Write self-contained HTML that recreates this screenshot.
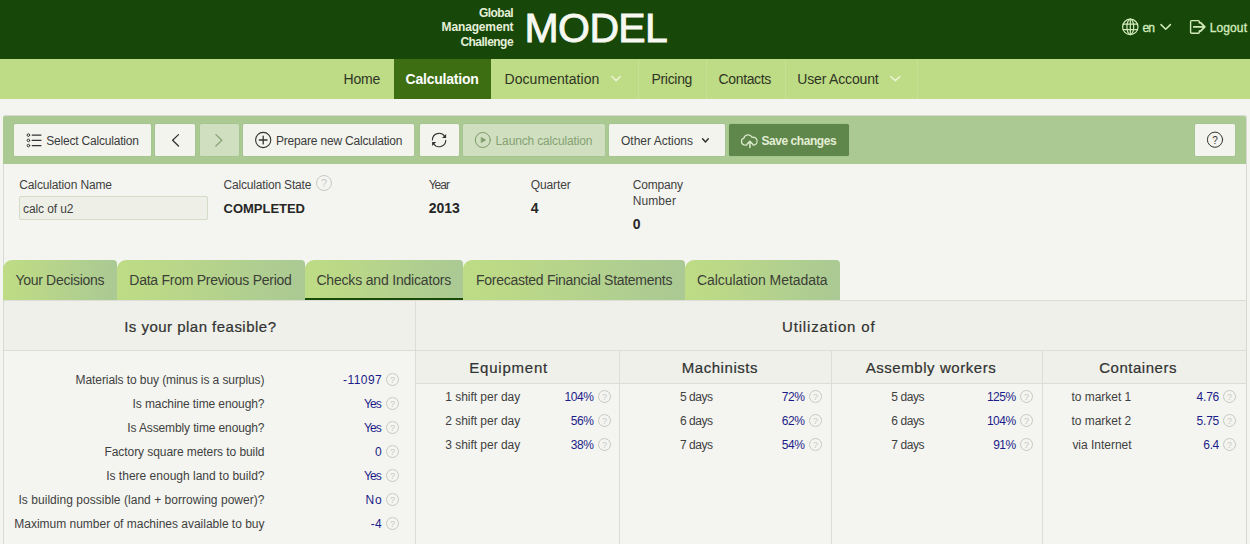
<!DOCTYPE html>
<html lang="en"><head><meta charset="utf-8"><title>MODEL - Calculation</title>
<style>
html,body{margin:0;padding:0}
body{width:1250px;height:544px;overflow:hidden;position:relative;background:#f4f5f0;font-family:"Liberation Sans","DejaVu Sans",sans-serif}
.a{position:absolute;display:block}
.t,.t2{position:absolute;white-space:nowrap;line-height:1;display:block}
.btn{position:absolute;top:124.3px;height:31.3px;background:#f3f4ee;border-radius:1.5px;box-shadow:0 0 0 .5px rgba(0,0,0,.04)}
.btn.dis{background:#cfdfc0}
.tab{position:absolute;top:260px;height:39.5px;border-radius:9px 4px 0 0;background:linear-gradient(90deg,#bedb85 0%,#bbd888 25%,#aac994 100%)}
.vl{position:absolute;width:1px;background:#dcddd7}
.hl{position:absolute;height:1px;background:#dcddd7}

</style></head>
<body>
<div class="a" style="left:0;top:0;width:1250px;height:59px;background:#174809"></div>
<div class="a" style="left:0;top:59px;width:1250px;height:40px;background:#bedb85"></div>
<div class="a" style="left:394px;top:59px;width:96.7px;height:40px;background:#3d6e12"></div>
<div class="a" style="left:638px;top:59px;width:1px;height:40px;background:rgba(255,255,255,.14)"></div>
<div class="a" style="left:705.5px;top:59px;width:1px;height:40px;background:rgba(255,255,255,.14)"></div>
<div class="a" style="left:784.5px;top:59px;width:1px;height:40px;background:rgba(255,255,255,.14)"></div>
<div class="a" style="left:917px;top:59px;width:1px;height:40px;background:rgba(255,255,255,.14)"></div>

<!-- region container -->
<div class="a" style="left:3px;top:115px;width:1241.6px;height:460px;border:1px solid #d8d9d3;border-radius:2px"></div>
<div class="a" style="left:3.2px;top:115.5px;width:1243.2px;height:48.2px;background:#abc993;border-radius:2px 2px 0 0"></div>

<!-- toolbar buttons -->
<div class="btn" style="left:14.2px;width:136.4px"></div>
<div class="btn" style="left:155.2px;width:39.4px"></div>
<div class="btn dis" style="left:199.5px;width:39.1px"></div>
<div class="btn" style="left:243.4px;width:171px"></div>
<div class="btn" style="left:419.6px;width:39px"></div>
<div class="btn dis" style="left:463.4px;width:141.2px"></div>
<div class="btn" style="left:609.4px;width:115.2px"></div>
<div class="btn" style="left:729.2px;width:119.8px;background:#5f874b"></div>
<div class="btn" style="left:1195.3px;width:39.6px"></div>

<!-- input -->
<div class="a" style="left:19.3px;top:196.3px;width:186.4px;height:21.4px;background:#eef0e8;border:1px solid #d3dcc4;border-radius:2px"></div>

<!-- tabs -->
<div class="tab" style="left:3px;width:114.3px"></div>
<div class="tab" style="left:117.3px;width:188px"></div>
<div class="tab" style="left:305.3px;width:157.7px"></div>
<div class="a" style="left:305.3px;top:297.6px;width:157.7px;height:2.1px;background:#1a4a08"></div>
<div class="tab" style="left:463px;width:222.2px"></div>
<div class="tab" style="left:685.2px;width:154.9px"></div>

<!-- panel -->
<div class="a" style="left:4px;top:300.5px;width:1241.5px;height:50px;background:#eef0e9"></div>
<div class="a" style="left:416px;top:350.5px;width:829.5px;height:33px;background:#eef0e9"></div>
<div class="hl" style="left:4px;top:300px;width:1242px"></div>
<div class="hl" style="left:4px;top:350px;width:1242px"></div>
<div class="hl" style="left:416px;top:383px;width:830px"></div>
<div class="vl" style="left:415px;top:300.5px;height:260px"></div>
<div class="vl" style="left:619px;top:351px;height:200px"></div>
<div class="vl" style="left:831px;top:351px;height:200px"></div>
<div class="vl" style="left:1042px;top:351px;height:200px"></div>

<!-- ICONS -->
<svg class="a" style="left:0;top:0" width="1250" height="170" viewBox="0 0 1250 170" fill="none" stroke-linecap="round" stroke-linejoin="round">
  <!-- globe -->
  <g stroke="#d3eabc" stroke-width="1.2">
    <circle cx="1130.3" cy="26.9" r="7.7"/>
    <ellipse cx="1130.3" cy="26.9" rx="3.4" ry="7.7"/>
    <path d="M1130.3 19.2V34.6M1123.2 24.2H1137.4M1123.2 29.6H1137.4"/>
  </g>
  <!-- en chevron -->
  <path d="M1161 24.6L1165.7 29.2L1170.4 24.6" stroke="#d3eabc" stroke-width="1.5"/>
  <!-- logout -->
  <g stroke="#d3eabc" stroke-width="1.4">
    <path d="M1199.3 23V21.6Q1199.3 20.6 1198.3 20.6H1191.6Q1190.6 20.6 1190.6 21.6V32.2Q1190.6 33.2 1191.6 33.2H1198.3Q1199.3 33.2 1199.3 32.2V30.8"/>
    <path d="M1193.8 26.9H1204M1200.6 22.6L1204.8 26.9L1200.6 31.2" stroke-width="1.8"/>
  </g>
  <!-- nav chevrons -->
  <path d="M611.9 76.5L616.1 80.6L620.3 76.5" stroke="#eaf4d6" stroke-width="1.5"/>
  <path d="M890.7 76.5L895.3 80.6L899.9 76.5" stroke="#eaf4d6" stroke-width="1.5"/>
  <!-- list icon -->
  <g stroke="#333" stroke-width="1">
    <circle cx="28.4" cy="135.1" r="1.3"/><circle cx="28.4" cy="140.4" r="1.3"/><circle cx="28.4" cy="145.6" r="1.3"/>
    <path d="M32.2 135.1H41M32.2 140.4H41M32.2 145.6H41" stroke-width="1.1"/>
  </g>
  <!-- prev / next -->
  <path d="M178.5 134.6L172.6 140.3L178.5 146" stroke="#333" stroke-width="1.3"/>
  <path d="M215.9 134.6L221.8 140.3L215.9 146" stroke="#8aa476" stroke-width="1.3"/>
  <!-- plus circle -->
  <g stroke="#333" stroke-width="1.1">
    <circle cx="263.2" cy="140" r="7.6"/>
    <path d="M259.3 140H267.1M263.2 136.1V143.9" stroke-width="1.3"/>
  </g>
  <!-- refresh -->
  <g stroke="#333" stroke-width="1.1">
    <path d="M432.4 140A6.7 6.7 0 0 1 444.6 136.2"/>
    <path d="M445.8 140.2A6.7 6.7 0 0 1 433.6 143.8"/>
    <path d="M446.1 134V138.1H442Z" fill="#333" stroke="none"/>
    <path d="M432.1 146V141.9H436.2Z" fill="#333" stroke="none"/>
  </g>
  <!-- play circle (disabled) -->
  <g stroke="#7d9a68" stroke-width="1">
    <circle cx="482.8" cy="140" r="7.5"/>
    <path d="M481.3 137.3L485.8 140L481.3 142.7Z" fill="#7d9a68" stroke-width=".4"/>
  </g>
  <!-- other actions chevron -->
  <path d="M702.6 138.8L705.45 141.9L708.3 138.8" stroke="#333" stroke-width="1.5"/>
  <!-- cloud upload -->
  <g stroke="#dcebcd" stroke-width="1.25">
    <path d="M746.6 145H744.6A3.5 3.5 0 0 1 743.9 138.2A4.3 4.3 0 0 1 752 137.3A3.95 3.95 0 0 1 754.2 145H753"/>
    <path d="M749.9 147.6V141.6M747 144.3L749.9 141.4L752.8 144.3" stroke-width="1.5"/>
  </g>
  <!-- help -->
  <circle cx="1215" cy="139.7" r="7.6" stroke="#333" stroke-width="1"/>
</svg>
<span class="t2" style="left:1212.3px;top:135.8px;font-size:10px;color:#333">?</span>

<svg class="a" style="left:315.2px;top:174.0px" width="18" height="18" viewBox="0 0 18 18"><circle cx="9.0" cy="9.0" r="7.5" fill="none" stroke="#c9c9c4" stroke-width="1"/><text x="9.0" y="12.9" font-size="11" text-anchor="middle" fill="#c9c9c4" font-family='"Liberation Sans",sans-serif'>?</text></svg>
<svg class="a" style="left:384.8px;top:371.9px" width="15" height="15" viewBox="0 0 15 15"><circle cx="7.5" cy="7.5" r="6.0" fill="none" stroke="#c9c9c4" stroke-width="1"/><text x="7.5" y="10.7" font-size="9" text-anchor="middle" fill="#c9c9c4" font-family='"Liberation Sans",sans-serif'>?</text></svg>
<svg class="a" style="left:384.8px;top:395.9px" width="15" height="15" viewBox="0 0 15 15"><circle cx="7.5" cy="7.5" r="6.0" fill="none" stroke="#c9c9c4" stroke-width="1"/><text x="7.5" y="10.7" font-size="9" text-anchor="middle" fill="#c9c9c4" font-family='"Liberation Sans",sans-serif'>?</text></svg>
<svg class="a" style="left:384.8px;top:419.9px" width="15" height="15" viewBox="0 0 15 15"><circle cx="7.5" cy="7.5" r="6.0" fill="none" stroke="#c9c9c4" stroke-width="1"/><text x="7.5" y="10.7" font-size="9" text-anchor="middle" fill="#c9c9c4" font-family='"Liberation Sans",sans-serif'>?</text></svg>
<svg class="a" style="left:384.8px;top:443.9px" width="15" height="15" viewBox="0 0 15 15"><circle cx="7.5" cy="7.5" r="6.0" fill="none" stroke="#c9c9c4" stroke-width="1"/><text x="7.5" y="10.7" font-size="9" text-anchor="middle" fill="#c9c9c4" font-family='"Liberation Sans",sans-serif'>?</text></svg>
<svg class="a" style="left:384.8px;top:467.9px" width="15" height="15" viewBox="0 0 15 15"><circle cx="7.5" cy="7.5" r="6.0" fill="none" stroke="#c9c9c4" stroke-width="1"/><text x="7.5" y="10.7" font-size="9" text-anchor="middle" fill="#c9c9c4" font-family='"Liberation Sans",sans-serif'>?</text></svg>
<svg class="a" style="left:384.8px;top:491.9px" width="15" height="15" viewBox="0 0 15 15"><circle cx="7.5" cy="7.5" r="6.0" fill="none" stroke="#c9c9c4" stroke-width="1"/><text x="7.5" y="10.7" font-size="9" text-anchor="middle" fill="#c9c9c4" font-family='"Liberation Sans",sans-serif'>?</text></svg>
<svg class="a" style="left:384.8px;top:515.9px" width="15" height="15" viewBox="0 0 15 15"><circle cx="7.5" cy="7.5" r="6.0" fill="none" stroke="#c9c9c4" stroke-width="1"/><text x="7.5" y="10.7" font-size="9" text-anchor="middle" fill="#c9c9c4" font-family='"Liberation Sans",sans-serif'>?</text></svg>
<svg class="a" style="left:596.8px;top:388.8px" width="15" height="15" viewBox="0 0 15 15"><circle cx="7.5" cy="7.5" r="6.0" fill="none" stroke="#c9c9c4" stroke-width="1"/><text x="7.5" y="10.7" font-size="9" text-anchor="middle" fill="#c9c9c4" font-family='"Liberation Sans",sans-serif'>?</text></svg>
<svg class="a" style="left:596.8px;top:412.8px" width="15" height="15" viewBox="0 0 15 15"><circle cx="7.5" cy="7.5" r="6.0" fill="none" stroke="#c9c9c4" stroke-width="1"/><text x="7.5" y="10.7" font-size="9" text-anchor="middle" fill="#c9c9c4" font-family='"Liberation Sans",sans-serif'>?</text></svg>
<svg class="a" style="left:596.8px;top:436.8px" width="15" height="15" viewBox="0 0 15 15"><circle cx="7.5" cy="7.5" r="6.0" fill="none" stroke="#c9c9c4" stroke-width="1"/><text x="7.5" y="10.7" font-size="9" text-anchor="middle" fill="#c9c9c4" font-family='"Liberation Sans",sans-serif'>?</text></svg>
<svg class="a" style="left:808.2px;top:388.8px" width="15" height="15" viewBox="0 0 15 15"><circle cx="7.5" cy="7.5" r="6.0" fill="none" stroke="#c9c9c4" stroke-width="1"/><text x="7.5" y="10.7" font-size="9" text-anchor="middle" fill="#c9c9c4" font-family='"Liberation Sans",sans-serif'>?</text></svg>
<svg class="a" style="left:808.2px;top:412.8px" width="15" height="15" viewBox="0 0 15 15"><circle cx="7.5" cy="7.5" r="6.0" fill="none" stroke="#c9c9c4" stroke-width="1"/><text x="7.5" y="10.7" font-size="9" text-anchor="middle" fill="#c9c9c4" font-family='"Liberation Sans",sans-serif'>?</text></svg>
<svg class="a" style="left:808.2px;top:436.8px" width="15" height="15" viewBox="0 0 15 15"><circle cx="7.5" cy="7.5" r="6.0" fill="none" stroke="#c9c9c4" stroke-width="1"/><text x="7.5" y="10.7" font-size="9" text-anchor="middle" fill="#c9c9c4" font-family='"Liberation Sans",sans-serif'>?</text></svg>
<svg class="a" style="left:1019.3px;top:388.8px" width="15" height="15" viewBox="0 0 15 15"><circle cx="7.5" cy="7.5" r="6.0" fill="none" stroke="#c9c9c4" stroke-width="1"/><text x="7.5" y="10.7" font-size="9" text-anchor="middle" fill="#c9c9c4" font-family='"Liberation Sans",sans-serif'>?</text></svg>
<svg class="a" style="left:1019.3px;top:412.8px" width="15" height="15" viewBox="0 0 15 15"><circle cx="7.5" cy="7.5" r="6.0" fill="none" stroke="#c9c9c4" stroke-width="1"/><text x="7.5" y="10.7" font-size="9" text-anchor="middle" fill="#c9c9c4" font-family='"Liberation Sans",sans-serif'>?</text></svg>
<svg class="a" style="left:1019.3px;top:436.8px" width="15" height="15" viewBox="0 0 15 15"><circle cx="7.5" cy="7.5" r="6.0" fill="none" stroke="#c9c9c4" stroke-width="1"/><text x="7.5" y="10.7" font-size="9" text-anchor="middle" fill="#c9c9c4" font-family='"Liberation Sans",sans-serif'>?</text></svg>
<svg class="a" style="left:1222.3px;top:388.8px" width="15" height="15" viewBox="0 0 15 15"><circle cx="7.5" cy="7.5" r="6.0" fill="none" stroke="#c9c9c4" stroke-width="1"/><text x="7.5" y="10.7" font-size="9" text-anchor="middle" fill="#c9c9c4" font-family='"Liberation Sans",sans-serif'>?</text></svg>
<svg class="a" style="left:1222.3px;top:412.8px" width="15" height="15" viewBox="0 0 15 15"><circle cx="7.5" cy="7.5" r="6.0" fill="none" stroke="#c9c9c4" stroke-width="1"/><text x="7.5" y="10.7" font-size="9" text-anchor="middle" fill="#c9c9c4" font-family='"Liberation Sans",sans-serif'>?</text></svg>
<svg class="a" style="left:1222.3px;top:436.8px" width="15" height="15" viewBox="0 0 15 15"><circle cx="7.5" cy="7.5" r="6.0" fill="none" stroke="#c9c9c4" stroke-width="1"/><text x="7.5" y="10.7" font-size="9" text-anchor="middle" fill="#c9c9c4" font-family='"Liberation Sans",sans-serif'>?</text></svg>
<span class="t" id="t0" style="left:479.0px;top:7.0px;font-size:12px;font-weight:700;color:#e6efd9;letter-spacing:-0.549px;">Global</span>
<span class="t" id="t1" style="left:441.6px;top:21.4px;font-size:12px;font-weight:700;color:#e6efd9;letter-spacing:-0.151px;">Management</span>
<span class="t" id="t2" style="left:460.4px;top:35.8px;font-size:12px;font-weight:700;color:#e6efd9;letter-spacing:-0.520px;">Challenge</span>
<span class="t" id="t3" style="left:524.6px;top:8.4px;font-size:41px;font-weight:400;color:#f6f8f1;letter-spacing:-0.628px;-webkit-text-stroke:0.9px #f6f8f1;">MODEL</span>
<span class="t" id="t4" style="left:1142.5px;top:21.5px;font-size:12px;font-weight:400;color:#d3eabc;letter-spacing:-0.859px;-webkit-text-stroke:0.35px #d3eabc;">en</span>
<span class="t" id="t5" style="left:1209.7px;top:21.5px;font-size:12px;font-weight:400;color:#d3eabc;letter-spacing:0.119px;-webkit-text-stroke:0.35px #d3eabc;">Logout</span>
<span class="t" id="t6" style="left:343.6px;top:72.3px;font-size:14px;font-weight:400;color:#2f3524;letter-spacing:-0.220px;">Home</span>
<span class="t" id="t7" style="left:405.6px;top:72.3px;font-size:14px;font-weight:700;color:#ffffff;letter-spacing:-0.227px;">Calculation</span>
<span class="t" id="t8" style="left:504.6px;top:72.3px;font-size:14px;font-weight:400;color:#2f3524;letter-spacing:0.044px;">Documentation</span>
<span class="t" id="t9" style="left:651.5px;top:72.3px;font-size:14px;font-weight:400;color:#2f3524;letter-spacing:-0.316px;">Pricing</span>
<span class="t" id="t10" style="left:718.5px;top:72.3px;font-size:14px;font-weight:400;color:#2f3524;letter-spacing:-0.350px;">Contacts</span>
<span class="t" id="t11" style="left:797.3px;top:72.3px;font-size:14px;font-weight:400;color:#2f3524;letter-spacing:-0.170px;">User Account</span>
<span class="t" id="t12" style="left:46.3px;top:135.0px;font-size:12px;font-weight:400;color:#3b3b3b;letter-spacing:-0.198px;">Select Calculation</span>
<span class="t" id="t13" style="left:276.0px;top:135.0px;font-size:12px;font-weight:400;color:#3b3b3b;letter-spacing:-0.198px;">Prepare new Calculation</span>
<span class="t" id="t14" style="left:495.6px;top:135.0px;font-size:12px;font-weight:400;color:#86a272;letter-spacing:-0.153px;">Launch calculation</span>
<span class="t" id="t15" style="left:621.0px;top:135.0px;font-size:12px;font-weight:400;color:#3b3b3b;letter-spacing:-0.004px;">Other Actions</span>
<span class="t" id="t16" style="left:761.4px;top:135.0px;font-size:12px;font-weight:700;color:#e3eed5;letter-spacing:-0.441px;">Save changes</span>
<span class="t" id="t17" style="left:19.3px;top:179.0px;font-size:12px;font-weight:400;color:#3f3f3f;letter-spacing:-0.135px;">Calculation Name</span>
<span class="t" id="t18" style="left:23.1px;top:202.8px;font-size:12px;font-weight:400;color:#3f3f3f;letter-spacing:-0.108px;">calc of u2</span>
<span class="t" id="t19" style="left:223.6px;top:179.0px;font-size:12px;font-weight:400;color:#3f3f3f;letter-spacing:-0.183px;">Calculation State</span>
<span class="t" id="t20" style="left:223.6px;top:201.8px;font-size:13px;font-weight:700;color:#262626;letter-spacing:-0.028px;">COMPLETED</span>
<span class="t" id="t21" style="left:428.7px;top:179.0px;font-size:12px;font-weight:400;color:#3f3f3f;letter-spacing:-0.983px;">Year</span>
<span class="t" id="t22" style="left:428.7px;top:201.0px;font-size:14px;font-weight:700;color:#262626;letter-spacing:-0.052px;">2013</span>
<span class="t" id="t23" style="left:530.7px;top:179.0px;font-size:12px;font-weight:400;color:#3f3f3f;letter-spacing:-0.098px;">Quarter</span>
<span class="t" id="t24" style="left:530.7px;top:201.0px;font-size:14px;font-weight:700;color:#262626;letter-spacing:0.000px;">4</span>
<span class="t" id="t25" style="left:632.7px;top:179.0px;font-size:12px;font-weight:400;color:#3f3f3f;letter-spacing:-0.193px;">Company</span>
<span class="t" id="t26" style="left:632.7px;top:195.0px;font-size:12px;font-weight:400;color:#3f3f3f;letter-spacing:0.102px;">Number</span>
<span class="t" id="t27" style="left:632.7px;top:217.0px;font-size:14px;font-weight:700;color:#262626;letter-spacing:0.000px;">0</span>
<span class="t" id="t28" style="left:15.4px;top:272.6px;font-size:14px;font-weight:400;color:#3b3f36;letter-spacing:-0.290px;">Your Decisions</span>
<span class="t" id="t29" style="left:129.3px;top:272.6px;font-size:14px;font-weight:400;color:#3b3f36;letter-spacing:-0.260px;">Data From Previous Period</span>
<span class="t" id="t30" style="left:316.4px;top:272.6px;font-size:14px;font-weight:400;color:#3b3f36;letter-spacing:-0.182px;">Checks and Indicators</span>
<span class="t" id="t31" style="left:476.1px;top:272.6px;font-size:14px;font-weight:400;color:#3b3f36;letter-spacing:-0.279px;">Forecasted Financial Statements</span>
<span class="t" id="t32" style="left:697.0px;top:272.6px;font-size:14px;font-weight:400;color:#3b3f36;letter-spacing:-0.049px;">Calculation Metadata</span>
<span class="t" id="t33" style="left:124.2px;top:318.6px;font-size:15px;font-weight:400;color:#333333;letter-spacing:0.478px;-webkit-text-stroke:0.22px #333333;">Is your plan feasible?</span>
<span class="t" id="t34" style="left:782.0px;top:318.6px;font-size:15px;font-weight:400;color:#333333;letter-spacing:0.838px;-webkit-text-stroke:0.22px #333333;">Utilization of</span>
<span class="t" id="t35" style="left:469.2px;top:359.5px;font-size:15px;font-weight:400;color:#333333;letter-spacing:0.798px;-webkit-text-stroke:0.22px #333333;">Equipment</span>
<span class="t" id="t36" style="left:681.7px;top:359.5px;font-size:15px;font-weight:400;color:#333333;letter-spacing:0.560px;-webkit-text-stroke:0.22px #333333;">Machinists</span>
<span class="t" id="t37" style="left:865.7px;top:359.5px;font-size:15px;font-weight:400;color:#333333;letter-spacing:0.560px;-webkit-text-stroke:0.22px #333333;">Assembly workers</span>
<span class="t" id="t38" style="left:1099.2px;top:359.5px;font-size:15px;font-weight:400;color:#333333;letter-spacing:0.528px;-webkit-text-stroke:0.22px #333333;">Containers</span>
<span class="t" id="t39" style="left:75.6px;top:374.2px;font-size:12px;font-weight:400;color:#3f3f3f;letter-spacing:-0.088px;">Materials to buy (minus is a surplus)</span>
<span class="t" id="t40" style="left:343.0px;top:374.2px;font-size:12px;font-weight:400;color:#1c1c8a;letter-spacing:0.463px;">-11097</span>
<span class="t" id="t41" style="left:132.6px;top:398.2px;font-size:12px;font-weight:400;color:#3f3f3f;letter-spacing:-0.100px;">Is machine time enough?</span>
<span class="t" id="t42" style="left:364.0px;top:398.2px;font-size:12px;font-weight:400;color:#1c1c8a;letter-spacing:-0.889px;">Yes</span>
<span class="t" id="t43" style="left:127.3px;top:422.2px;font-size:12px;font-weight:400;color:#3f3f3f;letter-spacing:-0.125px;">Is Assembly time enough?</span>
<span class="t" id="t44" style="left:364.0px;top:422.2px;font-size:12px;font-weight:400;color:#1c1c8a;letter-spacing:-0.889px;">Yes</span>
<span class="t" id="t45" style="left:104.5px;top:446.2px;font-size:12px;font-weight:400;color:#3f3f3f;letter-spacing:-0.072px;">Factory square meters to build</span>
<span class="t" id="t46" style="left:375.0px;top:446.2px;font-size:12px;font-weight:400;color:#1c1c8a;letter-spacing:0.000px;">0</span>
<span class="t" id="t47" style="left:106.2px;top:470.2px;font-size:12px;font-weight:400;color:#3f3f3f;letter-spacing:0.006px;">Is there enough land to build?</span>
<span class="t" id="t48" style="left:364.0px;top:470.2px;font-size:12px;font-weight:400;color:#1c1c8a;letter-spacing:-0.889px;">Yes</span>
<span class="t" id="t49" style="left:18.5px;top:494.2px;font-size:12px;font-weight:400;color:#3f3f3f;letter-spacing:0.034px;">Is building possible (land + borrowing power)?</span>
<span class="t" id="t50" style="left:365.4px;top:494.2px;font-size:12px;font-weight:400;color:#1c1c8a;letter-spacing:1.056px;">No</span>
<span class="t" id="t51" style="left:14.3px;top:518.2px;font-size:12px;font-weight:400;color:#3f3f3f;letter-spacing:-0.014px;">Maximum number of machines available to buy</span>
<span class="t" id="t52" style="left:370.8px;top:518.2px;font-size:12px;font-weight:400;color:#1c1c8a;letter-spacing:0.328px;">-4</span>
<span class="t" id="t53" style="left:445.3px;top:391.0px;font-size:12px;font-weight:400;color:#3f3f3f;letter-spacing:-0.034px;">1 shift per day</span>
<span class="t" id="t54" style="left:564.4px;top:391.0px;font-size:12px;font-weight:400;color:#1c1c8a;letter-spacing:-0.368px;">104%</span>
<span class="t" id="t55" style="left:445.3px;top:415.0px;font-size:12px;font-weight:400;color:#3f3f3f;letter-spacing:-0.034px;">2 shift per day</span>
<span class="t" id="t56" style="left:570.8px;top:415.0px;font-size:12px;font-weight:400;color:#1c1c8a;letter-spacing:-0.416px;">56%</span>
<span class="t" id="t57" style="left:445.3px;top:439.0px;font-size:12px;font-weight:400;color:#3f3f3f;letter-spacing:-0.034px;">3 shift per day</span>
<span class="t" id="t58" style="left:570.8px;top:439.0px;font-size:12px;font-weight:400;color:#1c1c8a;letter-spacing:-0.416px;">38%</span>
<span class="t" id="t59" style="left:679.9px;top:391.0px;font-size:12px;font-weight:400;color:#3f3f3f;letter-spacing:-0.452px;">5 days</span>
<span class="t" id="t60" style="left:781.8px;top:391.0px;font-size:12px;font-weight:400;color:#1c1c8a;letter-spacing:-0.416px;">72%</span>
<span class="t" id="t61" style="left:679.9px;top:415.0px;font-size:12px;font-weight:400;color:#3f3f3f;letter-spacing:-0.452px;">6 days</span>
<span class="t" id="t62" style="left:781.8px;top:415.0px;font-size:12px;font-weight:400;color:#1c1c8a;letter-spacing:-0.416px;">62%</span>
<span class="t" id="t63" style="left:679.9px;top:439.0px;font-size:12px;font-weight:400;color:#3f3f3f;letter-spacing:-0.452px;">7 days</span>
<span class="t" id="t64" style="left:781.8px;top:439.0px;font-size:12px;font-weight:400;color:#1c1c8a;letter-spacing:-0.416px;">54%</span>
<span class="t" id="t65" style="left:891.3px;top:391.0px;font-size:12px;font-weight:400;color:#3f3f3f;letter-spacing:-0.432px;">5 days</span>
<span class="t" id="t66" style="left:986.9px;top:391.0px;font-size:12px;font-weight:400;color:#1c1c8a;letter-spacing:-0.501px;">125%</span>
<span class="t" id="t67" style="left:891.3px;top:415.0px;font-size:12px;font-weight:400;color:#3f3f3f;letter-spacing:-0.432px;">6 days</span>
<span class="t" id="t68" style="left:986.9px;top:415.0px;font-size:12px;font-weight:400;color:#1c1c8a;letter-spacing:-0.501px;">104%</span>
<span class="t" id="t69" style="left:891.3px;top:439.0px;font-size:12px;font-weight:400;color:#3f3f3f;letter-spacing:-0.432px;">7 days</span>
<span class="t" id="t70" style="left:993.3px;top:439.0px;font-size:12px;font-weight:400;color:#1c1c8a;letter-spacing:-0.616px;">91%</span>
<span class="t" id="t71" style="left:1071.4px;top:391.0px;font-size:12px;font-weight:400;color:#3f3f3f;letter-spacing:-0.023px;">to market 1</span>
<span class="t" id="t72" style="left:1196.5px;top:391.0px;font-size:12px;font-weight:400;color:#1c1c8a;letter-spacing:-0.186px;">4.76</span>
<span class="t" id="t73" style="left:1071.4px;top:415.0px;font-size:12px;font-weight:400;color:#3f3f3f;letter-spacing:-0.023px;">to market 2</span>
<span class="t" id="t74" style="left:1196.5px;top:415.0px;font-size:12px;font-weight:400;color:#1c1c8a;letter-spacing:-0.186px;">5.75</span>
<span class="t" id="t75" style="left:1072.4px;top:439.0px;font-size:12px;font-weight:400;color:#3f3f3f;letter-spacing:-0.016px;">via Internet</span>
<span class="t" id="t76" style="left:1203.3px;top:439.0px;font-size:12px;font-weight:400;color:#1c1c8a;letter-spacing:-0.344px;">6.4</span>
</body></html>
